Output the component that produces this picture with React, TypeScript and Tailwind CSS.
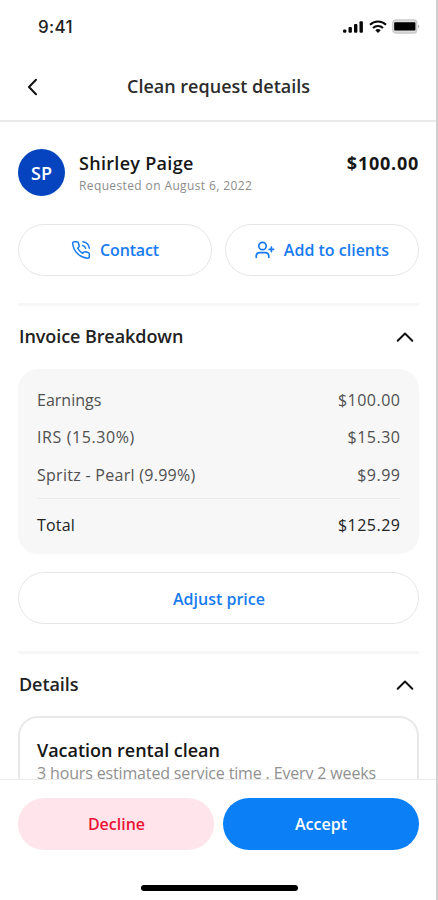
import type { ReactNode } from "react";

function Chevron({ className, d }: { className: string; d: string }) {
  return (
    <svg viewBox="0 0 20 20" className={className} fill="none" stroke="#111" strokeWidth="2" strokeLinecap="round" strokeLinejoin="round">
      <path d={d} />
    </svg>
  );
}

function StatusBar() {
  return (
    <div className="flex h-[53px] shrink-0 items-center justify-between pl-[38px] pr-[15px]">
      <span className="font-['Inter',sans-serif] text-[17px] font-medium leading-5 tracking-[0.3px] text-[#222]">9:41</span>
      <div className="flex h-4 items-center">
        <svg width="21" height="14" viewBox="0 0 21 14" fill="#080808">
          <rect x="0" y="9.4" width="3.4" height="3.4" rx="1.2" />
          <rect x="5.5" y="7" width="3.4" height="5.8" rx="1" />
          <rect x="11" y="4" width="3.4" height="8.8" rx="1" />
          <rect x="16.5" y="1.2" width="3.4" height="11.6" rx="1" />
        </svg>
        <svg className="ml-[5px]" width="18" height="14" viewBox="0 0 18 14" fill="none" stroke="#080808" strokeWidth="2.1">
          <path d="M1 4.8a11.3 11.3 0 0 1 16 0M4 8a7.2 7.2 0 0 1 10 0" />
          <path d="M6.3 10.3a3.9 3.9 0 0 1 5.4 0L9 13z" fill="#080808" stroke="none" />
        </svg>
        <svg className="ml-[5px] mr-px" width="28" height="15" viewBox="0 0 28 15">
          <rect x="0.8" y="0.8" width="24" height="13.2" rx="3" fill="#ddd" stroke="#c9c9c9" strokeWidth="1.3" />
          <rect x="2.2" y="3.2" width="21.2" height="8.3" rx="0.8" fill="#000" />
          <path d="M26.2 5.5c1.5.6 1.5 3.4 0 4z" fill="#aaa" />
        </svg>
      </div>
    </div>
  );
}

function Header() {
  return (
    <header className="flex h-[69px] shrink-0 items-center border-b-[2px] border-[#e9e9e9] pl-[23px] pr-[22px]">
      <Chevron className="size-5" d="M13 2.7 6 10l7 7.3" />
      <h1 className="flex-1 pr-5 text-center text-[18px] font-semibold text-[#2c2c2c]">Clean request details</h1>
    </header>
  );
}

function PillButton({ children, className }: { children: ReactNode; className: string }) {
  return (
    <button className={`flex h-[52px] items-center justify-center rounded-full text-[16px] font-semibold ${className}`}>
      {children}
    </button>
  );
}

function ClientSummary() {
  return (
    <section className="pt-[27px]">
      <div className="flex items-center">
        <div className="flex size-[47px] items-center justify-center rounded-full bg-[#0544be] pt-px text-[18px] font-semibold text-white">SP</div>
        <div className="ml-[14px] flex-1 pt-[2px]">
          <div className="text-[18px] font-semibold leading-[25px] tracking-[0.3px]">Shirley Paige</div>
          <div className="text-[12px] leading-5 tracking-[0.38px] text-[#8c8c8c]">Requested on August 6, 2022</div>
        </div>
        <div className="self-start pt-[2px] text-[18px] font-bold leading-[25px] tracking-[0.75px]">$100.00</div>
      </div>
      <div className="mt-[28px] grid grid-cols-2 gap-[13px]">
        <PillButton className="border-[1.5px] border-[#e6e6e6] text-[#187bf0]">
          <svg className="mr-[9px]" width="20" height="20" viewBox="0 0 24 24" fill="none" stroke="currentColor" strokeWidth="1.8" strokeLinecap="round" strokeLinejoin="round">
            <path d="M22 17v3a2 2 0 0 1-2.2 2A19.8 19.8 0 0 1 2 4.2 2 2 0 0 1 4 2h3a2 2 0 0 1 2 1.7c.1 1 .4 1.9.7 2.8a2 2 0 0 1-.5 2.1L8 9.9a16 16 0 0 0 6 6l1.3-1.3a2 2 0 0 1 2.1-.4c.9.3 1.8.6 2.8.7A2 2 0 0 1 22 17z" />
            <path d="M14 6.5a4.5 4.5 0 0 1 3.5 3.5M14.200 2a9 9 0 0 1 7.800 7.800" />
          </svg>
          <span className="tracking-[-0.15px]">Contact</span>
        </PillButton>
        <PillButton className="border-[1.5px] border-[#e6e6e6] text-[#187bf0]">
          <svg className="mr-[9px]" width="20" height="18" viewBox="0 0 20 18" fill="none" stroke="currentColor" strokeWidth="1.7" strokeLinecap="round">
            <circle cx="7.5" cy="5" r="3.7" />
            <path d="M1.2 16.300v-1c0-2.300 1.500-3.700 3.800-3.700h5c2.300 0 3.800 1.400 3.800 3.700v1M16.400 6.200v4.400M14.200 8.400h4.400" />
          </svg>
          <span>Add to clients</span>
        </PillButton>
      </div>
    </section>
  );
}

function SectionTitle({ children }: { children: ReactNode }) {
  return (
    <div className="flex h-[62px] items-center justify-between pl-px pr-[4px]">
      <h2 className="-mt-px text-[18px] font-semibold tracking-[-0.08px] text-[#222]">{children}</h2>
      <Chevron className="size-5" d="M2.7 13.7 10 6.5l7.3 7.2" />
    </div>
  );
}

function Row({ label, value, labelClass }: { label: string; value: string; labelClass: string }) {
  return (
    <div className="flex h-[37.5px] items-center justify-between text-[16px]">
      <span className={labelClass}>{label}</span>
      <span className="-mr-[0.5px] tracking-[0.5px]">{value}</span>
    </div>
  );
}

function Invoice() {
  return (
    <section>
      <SectionTitle>Invoice Breakdown</SectionTitle>
      <div className="mt-[1px] h-[185px] rounded-[20px] bg-[#f7f7f7] px-[19px] pt-[12px] text-[#505050]">
        <Row label="Earnings" value="$100.00" labelClass="tracking-normal" />
        <Row label="IRS (15.30%)" value="$15.30" labelClass="tracking-[0.6px]" />
        <Row label="Spritz - Pearl (9.99%)" value="$9.99" labelClass="tracking-[0.28px]" />
        <div className="mb-[8px] mt-[4px] h-px bg-[#ebebeb]" />
        <div className="text-[#222]">
          <Row label="Total" value="$125.29" labelClass="tracking-[0.2px]" />
        </div>
      </div>
      <PillButton className="mt-[18px] w-full border-[1.5px] border-[#e6e6e6] pl-px pt-px text-[#187bf0]">Adjust price</PillButton>
    </section>
  );
}

function Details() {
  return (
    <section>
      <SectionTitle>Details</SectionTitle>
      <div className="h-[120px] rounded-[20px] border-2 border-[#e9e9e9] px-[17px] pt-[19px]">
        <div className="text-[18px] font-semibold leading-[26px] tracking-[-0.02px]">Vacation rental clean</div>
        <div className="text-[16px] leading-[21px] tracking-[-0.15px] text-[#909090]">3 hours estimated service time . Every 2 weeks</div>
      </div>
    </section>
  );
}

export default function App() {
  return (
    <div className="flex h-[900px] w-[438px] flex-col overflow-hidden border-r-[2px] border-[#d0d0d0] bg-white font-['Open_Sans',sans-serif] text-[#161616]">
      <StatusBar />
      <Header />
      <main className="min-h-0 flex-1 overflow-hidden pl-[18px] pr-[17px]">
        <ClientSummary />
        <div className="mt-[27px] h-[3px] bg-[#f7f7f7]" />
        <Invoice />
        <div className="mt-[27px] h-[3px] bg-[#f7f7f7]" />
        <Details />
      </main>
      <footer className="h-[121px] shrink-0 border-t-[1.5px] border-[#ececec] pl-[18px] pr-[17px] pt-[18px]">
        <div className="grid grid-cols-2 gap-[9px]">
          <PillButton className="bg-[#ffe5eb] pl-px text-[#eb1237]">Decline</PillButton>
          <PillButton className="bg-[#0b7ff5] text-white">Accept</PillButton>
        </div>
        <div className="ml-[123px] mt-[35px] h-[6px] w-[157px] rounded-full bg-black" />
      </footer>
    </div>
  );
}
